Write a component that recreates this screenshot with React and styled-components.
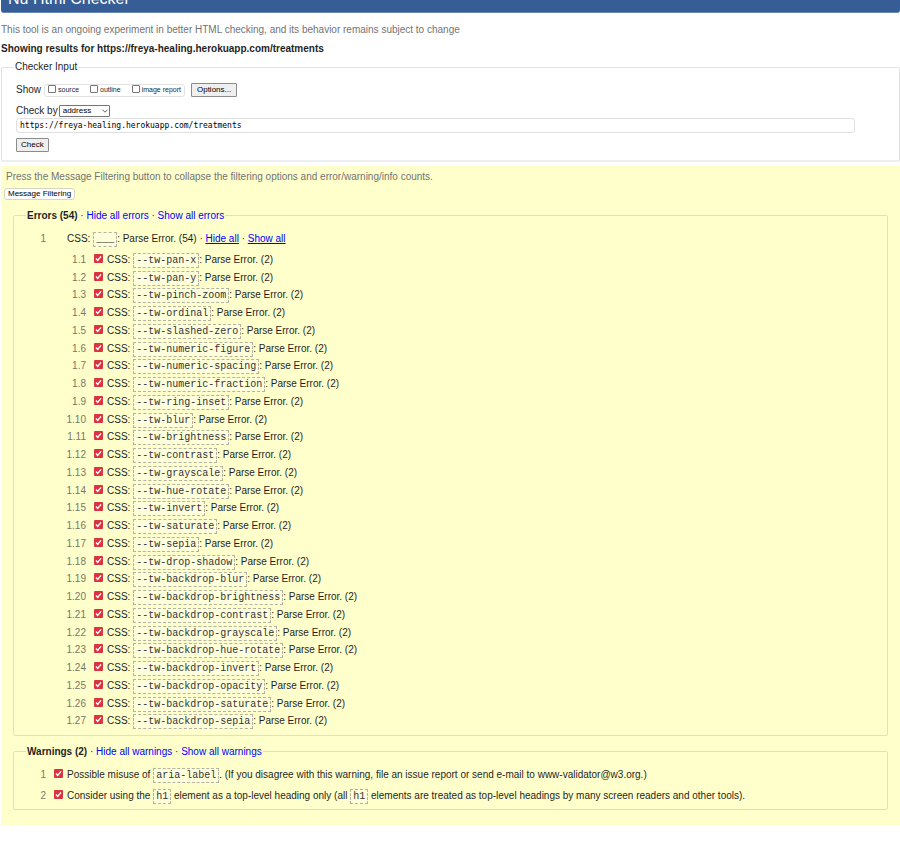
import React from "react";
import styled, { createGlobalStyle } from "styled-components";

const GlobalStyle = createGlobalStyle`
  * { box-sizing: border-box; }
  body {
    margin: 0;
    background: #fff;
    color: #1f1f1f;
    font: 10px/12px "Liberation Sans", Arial, sans-serif;
  }
`;

const Page = styled.div`
  padding-left: 1px;
`;

const Banner = styled.header`
  display: flex;
  align-items: flex-end;
  height: 13px;
  overflow: hidden;
  padding: 0 7px 5px;
  background: #365d95;
  border-bottom: 1px solid #6a87b3;
  border-radius: 0 0 3px 3px;
`;

const Title = styled.h1`
  margin: 0;
  color: #fff;
  font-size: 16px;
  font-weight: 400;
  line-height: 16px;
`;

const Note = styled.p`
  margin: 0;
  padding-top: ${(p) => (p.$spaced ? "11px" : "0")};
  color: #737373;
`;

const Subject = styled.h2`
  margin: 7px 0 6px;
  font-size: 10px;
  line-height: 12px;
`;

const Panel = styled.fieldset`
  min-width: 0;
  margin: 0;
  border: 1px solid #e2e2e2;
  border-bottom: 2px solid #eeeeee;
  border-radius: 2px;
  padding: 10px 44px 8px 14px;
`;

const Legend = styled.legend`
  padding: 0 1px;
  margin-left: -2px;
`;

const Line = styled.div`
  display: flex;
  align-items: center;
`;

const ShowLine = styled(Line)`
  height: 14px;
  margin-bottom: 8px;
`;

const Choices = styled.div`
  display: flex;
  align-items: center;
  gap: 11px;
  height: 13px;
  margin: 0 6px 0 3px;
  padding: 0 3px;
  border: 1px solid #e2e2e2;
  border-radius: 3px;
`;

const Choice = styled.label`
  display: flex;
  align-items: center;
  gap: 2px;
  font-size: 7px;
  line-height: 10px;
`;

const EmptyBox = styled.input.attrs({ type: "checkbox" })`
  appearance: none;
  width: 8px;
  height: 8px;
  margin: 0 0 3px;
  border: 1px solid #767676;
  border-radius: 1px;
  background: #fff;
`;

const Button = styled.button`
  height: 14px;
  padding: 0 4px;
  border: 1px solid #8b8b8b;
  border-radius: 1px;
  background: #efefef;
  color: #000;
  font: 8px/10px "Liberation Sans", Arial, sans-serif;
`;

const OptionsButton = styled(Button)`
  padding: 0 5px;
`;

const RoundButton = styled(Button)`
  display: block;
  height: 12px;
  margin: 5px 0 0 3px;
  padding: 0 3px;
  border-color: #d6d6c4;
  border-radius: 3px;
  background: #fff;
`;

const SelectWrap = styled.div`
  display: grid;
  align-items: center;
  margin-left: 1px;
  > * { grid-area: 1 / 1; }
`;

const Select = styled.select`
  appearance: none;
  width: 51px;
  height: 12px;
  padding: 0 3px;
  border: 1px solid #767676;
  border-radius: 1px;
  background: #fff;
  color: #000;
  font: 8px/10px "Liberation Sans", Arial, sans-serif;
`;

const Chevron = styled.svg`
  justify-self: end;
  width: 6px;
  height: 4px;
  margin-right: 2px;
  pointer-events: none;
`;

const Address = styled.input`
  display: block;
  width: 100%;
  height: 15px;
  margin: 1px 0 5px;
  padding: 0 3px;
  border: 1px solid #e0e0e0;
  border-radius: 3px;
  color: #000;
  font: 8px/12px "DejaVu Sans Mono", monospace;
`;

const Results = styled.section`
  margin-top: 4px;
  padding: 5px 12px 15px;
  background: #ffffcc;
`;

const Intro = styled.div`
  margin: 0 -7px 0 -12px;
  ${Note} { padding-left: 5px; }
`;

const Group = styled.fieldset`
  min-width: 0;
  margin: 9px 0 0;
  padding: 10px 12px 3px 0;
  border: 1px solid #dfdfc6;
  border-radius: 2px;
  &:last-child { padding-bottom: 5px; }
`;

const GroupLegend = styled.legend`
  margin-left: 12px;
  padding: 0 1px;
  line-height: 13px;
`;

const Link = styled.a`
  color: #0000ff;
  text-decoration: ${(p) => (p.$underlined ? "underline" : "none")};
`;

const Entries = styled.ol`
  display: grid;
  gap: 6px;
  margin: 0;
  padding: 0;
  list-style: none;
`;

const SubEntries = styled.ol`
  display: grid;
  grid-auto-rows: 1fr;
  height: 479px;
  margin: 6px 0 0;
  padding: 0;
  list-style: none;
`;

const Row = styled.div`
  display: grid;
  grid-template-columns: ${(p) => (p.$nested ? "72px 13px 1fr" : "32px 13px 1fr")};
  column-gap: 4px;
  align-items: baseline;
  min-height: 15px;
  white-space: nowrap;
`;

const Num = styled.span`
  color: #777766;
  text-align: right;
`;

const Tick = styled.span`
  display: grid;
  align-self: center;
  justify-content: end;
  padding-bottom: 4px;
  > * { grid-area: 1 / 1; }
`;

const RedBox = styled.input.attrs({ type: "checkbox" })`
  appearance: none;
  width: 9px;
  height: 9px;
  margin: 0;
  border-radius: 1px;
  background: #fff;
  &:checked { background: #dc3340; }
`;

const Mark = styled.svg`
  width: 9px;
  height: 9px;
  pointer-events: none;
`;

const Code = styled.code`
  display: inline-block;
  height: 15px;
  padding: 0 2px;
  border: 1px dashed #b4b49c;
  background: #ffffdb;
  color: #333;
  font: 10px/14px "Liberation Mono", "Courier New", monospace;
`;

const names = [
  "pan-x", "pan-y", "pinch-zoom", "ordinal", "slashed-zero", "numeric-figure",
  "numeric-spacing", "numeric-fraction", "ring-inset", "blur", "brightness",
  "contrast", "grayscale", "hue-rotate", "invert", "saturate", "sepia",
  "drop-shadow", "backdrop-blur", "backdrop-brightness", "backdrop-contrast",
  "backdrop-grayscale", "backdrop-hue-rotate", "backdrop-invert",
  "backdrop-opacity", "backdrop-saturate", "backdrop-sepia",
];

function Entry({ id, number, nested, children }) {
  return (
    <Row $nested={nested}>
      <Num>{number}</Num>
      <Tick>
        <RedBox id={id} defaultChecked />
        <Mark viewBox="0 0 9 9" aria-hidden="true">
          <path d="M2 4.6 L3.7 6.4 L7 2.4" fill="none" stroke="#fff" strokeWidth="1.4" />
        </Mark>
      </Tick>
      <label htmlFor={id}>{children}</label>
    </Row>
  );
}

export default function App() {
  return (
    <Page>
      <GlobalStyle />
      <Banner><Title>Nu Html Checker</Title></Banner>
      <main>
        <Note $spaced>
          This tool is an ongoing experiment in better HTML checking, and its behavior remains subject to change
        </Note>
        <Subject>Showing results for https://freya-healing.herokuapp.com/treatments</Subject>

        <Panel>
          <Legend>Checker Input</Legend>
          <ShowLine>
            Show
            <Choices>
              <Choice><EmptyBox />source</Choice>
              <Choice><EmptyBox />outline</Choice>
              <Choice><EmptyBox />image report</Choice>
            </Choices>
            <OptionsButton type="button">Options...</OptionsButton>
          </ShowLine>
          <Line>
            <label htmlFor="mode">Check by</label>
            <SelectWrap>
              <Select id="mode" defaultValue="address">
                <option value="address">address</option>
              </Select>
              <Chevron viewBox="0 0 6 4" aria-hidden="true">
                <path d="M0.5 0.7 L3 3.2 L5.5 0.7" fill="none" stroke="#333" strokeWidth="0.8" />
              </Chevron>
            </SelectWrap>
          </Line>
          <Address aria-label="Address" defaultValue="https://freya-healing.herokuapp.com/treatments" />
          <Button type="button">Check</Button>
        </Panel>

        <Results>
          <Intro>
            <Note>
              Press the Message Filtering button to collapse the filtering options and error/warning/info counts.
            </Note>
            <RoundButton type="button">Message Filtering</RoundButton>
          </Intro>

          <Group>
            <GroupLegend>
              <b>Errors (54)</b> · <Link href="#errors">Hide all errors</Link> · <Link href="#errors">Show all errors</Link>
            </GroupLegend>
            <Entries>
              <li>
                <Row>
                  <Num>1</Num>
                  <span />
                  <span>
                    CSS: <Code>___</Code>: Parse Error. (54) · <Link $underlined href="#hide">Hide all</Link> ·{" "}
                    <Link $underlined href="#show">Show all</Link>
                  </span>
                </Row>
                <SubEntries>
                  {names.map((name, i) => (
                    <li key={name}>
                      <Entry nested id={`e${i + 1}`} number={`1.${i + 1}`}>
                        CSS: <Code>--tw-{name}</Code>: Parse Error. (2)
                      </Entry>
                    </li>
                  ))}
                </SubEntries>
              </li>
            </Entries>
          </Group>

          <Group>
            <GroupLegend>
              <b>Warnings (2)</b> · <Link href="#warnings">Hide all warnings</Link> · <Link href="#warnings">Show all warnings</Link>
            </GroupLegend>
            <Entries>
              <li>
                <Entry id="w1" number="1">
                  Possible misuse of <Code>aria-label</Code>. (If you disagree with this warning, file an issue report or send e-mail to www-validator@w3.org.)
                </Entry>
              </li>
              <li>
                <Entry id="w2" number="2">
                  Consider using the <Code>h1</Code> element as a top-level heading only (all <Code>h1</Code> elements are treated as top-level headings by many screen readers and other tools).
                </Entry>
              </li>
            </Entries>
          </Group>
        </Results>
      </main>
    </Page>
  );
}
